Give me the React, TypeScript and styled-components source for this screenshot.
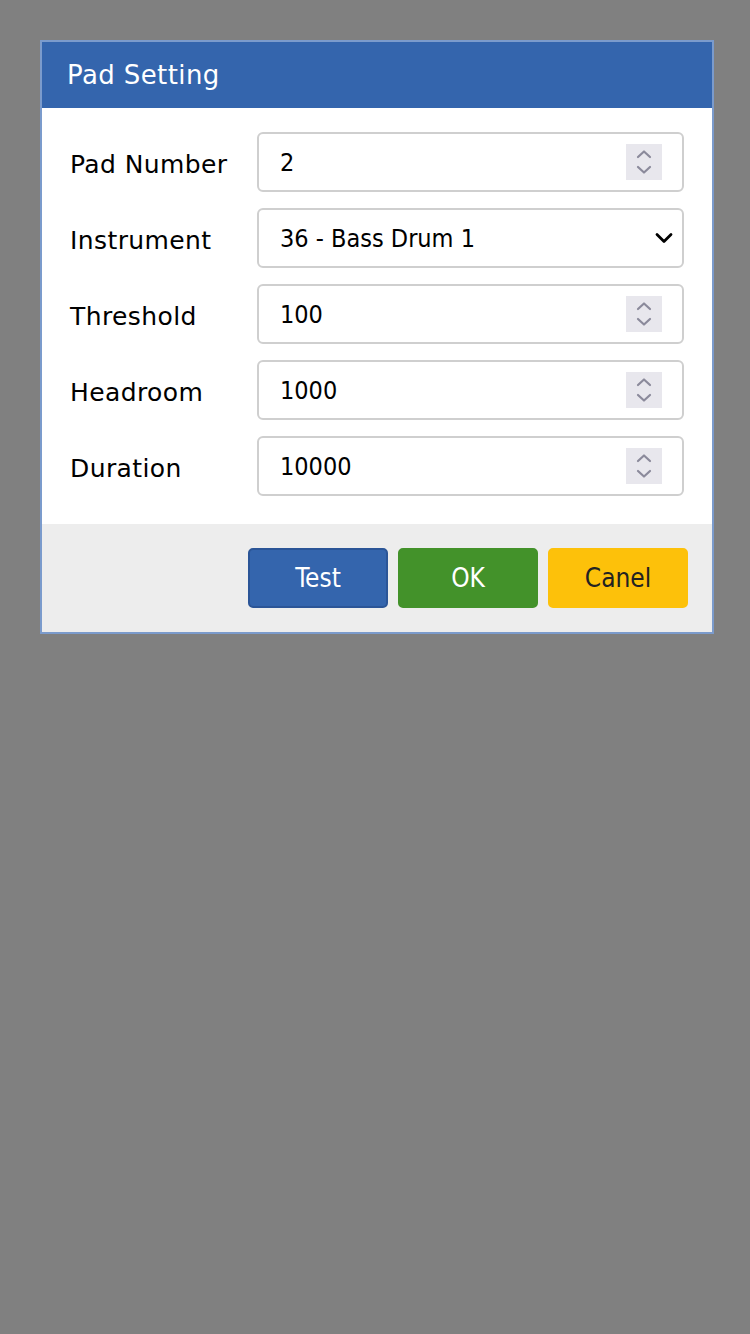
import React from "react";
import styled, { createGlobalStyle } from "styled-components";

const Global = createGlobalStyle`
  html, body { margin: 0; padding: 0; background: #808080; }
  body { width: 750px; height: 1334px; }
  * { box-sizing: border-box; }
`;

const Page = styled.div`
  width: 750px;
  height: 1334px;
  background: #808080;
  padding: 40px 36px 0 40px;
`;

const Dialog = styled.div`
  width: 674px;
  border: 2px solid #7b9bcc;
  background: #fff;
  display: flex;
  flex-direction: column;
`;

const Header = styled.div`
  height: 66px;
  background: #3465ad;
  color: #fff;
  font-family: "DejaVu Sans", Verdana, sans-serif;
  font-size: 26px;
  letter-spacing: 0.4px;
  display: flex;
  align-items: center;
  padding-left: 25px;
`;

const Body = styled.div`
  padding: 24px 28px 28px 28px;
  display: flex;
  flex-direction: column;
  gap: 16px;
`;

const Row = styled.div`
  display: grid;
  grid-template-columns: 187px 1fr;
  align-items: center;
  height: 60px;
`;

const Label = styled.div`
  font-family: "DejaVu Sans", Verdana, sans-serif;
  font-size: 25px;
  letter-spacing: 0.4px;
  color: #000;
  padding-top: 4px;
`;

const Field = styled.div<{ $select?: boolean }>`
  height: 60px;
  border: 2px solid #cfcfcf;
  border-radius: 6px;
  display: flex;
  align-items: center;
  justify-content: space-between;
  padding: 0 ${(p) => (p.$select ? "9px" : "20px")} 0 21px;
  font-family: "DejaVu Sans Condensed", "DejaVu Sans", sans-serif;
  font-stretch: condensed;
  font-size: 25px;
  color: #000;
`;

const Spinner = styled.div`
  width: 36px;
  height: 36px;
  background: #e8e7ed;
  display: flex;
  align-items: center;
  justify-content: center;
`;

const Footer = styled.div`
  background: #ededed;
  padding: 24px;
  display: flex;
  justify-content: flex-end;
  gap: 10px;
`;

type Variant = "blue" | "green" | "yellow";
const colors: Record<Variant, { bg: string; border: string; fg: string }> = {
  blue: { bg: "#3465ad", border: "#2b5597", fg: "#fff" },
  green: { bg: "#43922a", border: "#43922a", fg: "#fff" },
  yellow: { bg: "#fdc10a", border: "#fdc10a", fg: "#222" },
};

const Button = styled.button<{ $v: Variant }>`
  width: 140px;
  height: 60px;
  border-radius: 5px;
  border: 2px solid ${(p) => colors[p.$v].border};
  background: ${(p) => colors[p.$v].bg};
  color: ${(p) => colors[p.$v].fg};
  font-family: "DejaVu Sans Condensed", "DejaVu Sans", sans-serif;
  font-stretch: condensed;
  font-size: 26px;
  padding: 0;
  display: flex;
  align-items: center;
  justify-content: center;
`;

const SpinIcon = () => (
  <Spinner>
    <svg width="18" height="28" viewBox="0 0 18 28" fill="none">
      <polyline points="3,9 9,3.5 15,9" stroke="#8b8a9b" strokeWidth="2.2" strokeLinecap="round" strokeLinejoin="round" />
      <polyline points="3,19 9,24.5 15,19" stroke="#8b8a9b" strokeWidth="2.2" strokeLinecap="round" strokeLinejoin="round" />
    </svg>
  </Spinner>
);

const Chevron = () => (
  <svg width="18" height="12" viewBox="0 0 18 12" fill="none">
    <polyline points="2,2.5 9,9.5 16,2.5" stroke="#000" strokeWidth="2.8" strokeLinecap="round" strokeLinejoin="round" />
  </svg>
);

const rows: { label: string; value: string; select?: boolean }[] = [
  { label: "Pad Number", value: "2" },
  { label: "Instrument", value: "36 - Bass Drum 1", select: true },
  { label: "Threshold", value: "100" },
  { label: "Headroom", value: "1000" },
  { label: "Duration", value: "10000" },
];

export default function App() {
  return (
    <Page>
      <Global />
      <Dialog>
        <Header>Pad Setting</Header>
        <Body>
          {rows.map((r) => (
            <Row key={r.label}>
              <Label>{r.label}</Label>
              <Field $select={r.select}>
                <span>{r.value}</span>
                {r.select ? <Chevron /> : <SpinIcon />}
              </Field>
            </Row>
          ))}
        </Body>
        <Footer>
          <Button $v="blue">Test</Button>
          <Button $v="green">OK</Button>
          <Button $v="yellow">Canel</Button>
        </Footer>
      </Dialog>
    </Page>
  );
}
